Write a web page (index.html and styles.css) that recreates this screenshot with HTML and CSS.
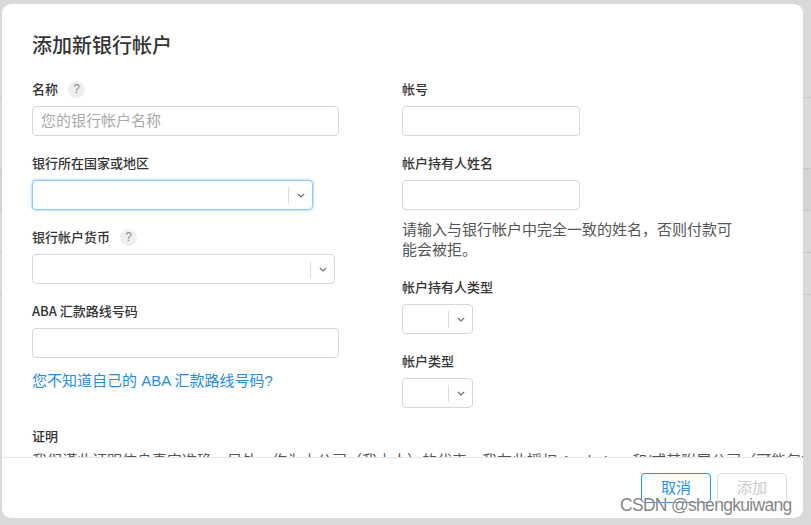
FILE: index.html
```html
<!DOCTYPE html>
<html lang="zh-CN">
<head>
<meta charset="utf-8">
<title>添加新银行帐户</title>
<link rel="stylesheet" href="styles.css">
</head>
<body>
<div class="page">
  <div class="bg-rows">
    <div class="bg-row h97"></div>
    <div class="bg-row h71"></div>
    <div class="bg-row h42 dark"></div>
    <div class="bg-row h42"></div>
    <div class="bg-row h41"></div>
  </div>

  <div class="modal">
    <div class="modal-body">
      <h1 class="title">添加新银行帐户</h1>
      <div class="form-grid">
        <div class="col">
          <div class="field">
            <div class="label-row"><span class="label">名称</span><span class="help-icon">?</span></div>
            <div class="input w307"><span class="placeholder">您的银行帐户名称</span></div>
          </div>
          <div class="field">
            <div class="label-row"><span class="label">银行所在国家或地区</span></div>
            <div class="select w281 focused">
              <span class="select-value"></span>
              <span class="select-divider"></span>
              <span class="select-arrow"><svg width="8" height="5" viewBox="0 0 8 5"><polyline points="0.8,0.8 4,4 7.2,0.8" fill="none" stroke="#666" stroke-width="1.1"/></svg></span>
            </div>
          </div>
          <div class="field">
            <div class="label-row"><span class="label">银行帐户货币</span><span class="help-icon">?</span></div>
            <div class="select w303">
              <span class="select-value"></span>
              <span class="select-divider"></span>
              <span class="select-arrow"><svg width="8" height="5" viewBox="0 0 8 5"><polyline points="0.8,0.8 4,4 7.2,0.8" fill="none" stroke="#666" stroke-width="1.1"/></svg></span>
            </div>
          </div>
          <div class="field">
            <div class="label-row"><span class="label">ABA 汇款路线号码</span></div>
            <div class="input w307"></div>
            <a class="link">您不知道自己的 ABA 汇款路线号码?</a>
          </div>
        </div>
        <div class="col">
          <div class="field">
            <div class="label-row"><span class="label">帐号</span></div>
            <div class="input w178"></div>
          </div>
          <div class="field">
            <div class="label-row"><span class="label">帐户持有人姓名</span></div>
            <div class="input w178"></div>
            <p class="help">请输入与银行帐户中完全一致的姓名，否则付款可能会被拒。</p>
          </div>
          <div class="field">
            <div class="label-row"><span class="label">帐户持有人类型</span></div>
            <div class="select w71">
              <span class="select-value"></span>
              <span class="select-divider"></span>
              <span class="select-arrow"><svg width="8" height="5" viewBox="0 0 8 5"><polyline points="0.8,0.8 4,4 7.2,0.8" fill="none" stroke="#666" stroke-width="1.1"/></svg></span>
            </div>
          </div>
          <div class="field">
            <div class="label-row"><span class="label">帐户类型</span></div>
            <div class="select w71">
              <span class="select-value"></span>
              <span class="select-divider"></span>
              <span class="select-arrow"><svg width="8" height="5" viewBox="0 0 8 5"><polyline points="0.8,0.8 4,4 7.2,0.8" fill="none" stroke="#666" stroke-width="1.1"/></svg></span>
            </div>
          </div>
        </div>
      </div>
      <div class="attest">
        <div class="label">证明</div>
        <p class="attest-text">我们谨此证明信息真实准确。另外，作为本公司（我本人）的代表，我在此授权 Apple Inc. 和/或其附属公司（可能包括）向上述银行帐户存入款项。</p>
      </div>
    </div>
    <div class="modal-footer">
      <button class="btn btn-primary">取消</button>
      <button class="btn btn-disabled">添加</button>
    </div>
  </div>

  <div class="watermark">CSDN @shengkuiwang</div>
</div>
</body>
</html>
```

FILE: styles.css
```css
html, body {
  margin: 0;
  padding: 0;
}

body {
  width: 811px;
  height: 525px;
  overflow: hidden;
  background: #d9d9d9;
  font-family: "Liberation Sans", "Noto Sans CJK SC", sans-serif;
  color: #333;
}

.page {
  position: relative;
  width: 811px;
  height: 525px;
}

/* dimmed page behind the modal */
.bg-rows {
  display: flex;
  flex-direction: column;
}

.bg-row {
  box-sizing: border-box;
  border-bottom: 1px solid #c8c8c8;
}

.bg-row.dark {
  background: #d3d3d3;
}

.h97 { height: 98px; }
.h71 { height: 71px; }
.h42 { height: 42px; }
.h41 { height: 42px; }

/* modal */
.modal {
  position: absolute;
  left: 2px;
  top: 4px;
  width: 801px;
  height: 514px;
  background: #fff;
  border-radius: 9px;
  display: flex;
  flex-direction: column;
  overflow: hidden;
}

.modal-body {
  flex: 0 0 453px;
  box-sizing: border-box;
  padding: 28px 30px 0;
  overflow: hidden;
}

.title {
  margin: 0 0 20px;
  font-size: 20px;
  line-height: 29px;
  font-weight: 500;
  color: #333;
}

.form-grid {
  display: grid;
  grid-template-columns: 340px 340px;
  column-gap: 30px;
}

.col {
  display: flex;
  flex-direction: column;
}

.field {
  display: flex;
  flex-direction: column;
  align-items: flex-start;
  margin-bottom: 19px;
}

.label-row {
  display: flex;
  align-items: flex-start;
  gap: 10px;
  height: 18px;
  margin-bottom: 7px;
}

.label {
  font-family: "Noto Sans CJK SC", "Liberation Sans", sans-serif;
  font-size: 13px;
  line-height: 16px;
  font-weight: 500;
  color: #333;
}

.help-icon {
  width: 17px;
  height: 17px;
  border-radius: 50%;
  background: #efefef;
  color: #8a8a8a;
  font-size: 12px;
  line-height: 17px;
  text-align: center;
  font-family: "Liberation Sans", sans-serif;
}

.input,
.select {
  box-sizing: border-box;
  height: 30px;
  border: 1px solid #d6d6d6;
  border-radius: 4px;
  background: #fff;
}

.input {
  padding: 0 8px;
  font-size: 15px;
  line-height: 28px;
}

.placeholder {
  color: #a9a9a9;
}

.select {
  display: flex;
  align-items: center;
}

.select.focused {
  border-color: #86cbff;
  box-shadow: 0 0 2px 1px rgba(90, 170, 255, 0.35);
}

.select-value {
  flex: 1;
}

.select-divider {
  width: 1px;
  height: 17px;
  background: #dcdcdc;
}

.select-arrow {
  width: 23px;
  display: flex;
  justify-content: center;
  align-items: center;
  padding-top: 1px;
}

.w307 { width: 307px; }
.w281 { width: 281px; }
.w303 { width: 303px; }
.w178 { width: 178px; }
.w71 { width: 71px; }

.link {
  margin-top: 13px;
  font-size: 15px;
  line-height: 20px;
  color: #1f8cec;
  cursor: pointer;
}

.help {
  margin: 10px 0 0;
  width: 340px;
  font-size: 15px;
  line-height: 20px;
  color: #555;
}

.attest .label {
  display: block;
  line-height: 18px;
}

.attest-text {
  margin: 5px 0 0;
  font-size: 15px;
  line-height: 22px;
  color: #555;
  white-space: nowrap;
}

.modal-footer {
  flex: 1;
  border-top: 1px solid #e6e6e6;
  display: flex;
  justify-content: flex-end;
  align-items: flex-start;
  gap: 6px;
  padding: 15px 16px 0;
}

.btn {
  box-sizing: border-box;
  width: 70px;
  height: 30px;
  border-radius: 4px;
  background: #fff;
  font-family: "Liberation Sans", "Noto Sans CJK SC", sans-serif;
  font-size: 15px;
  line-height: 28px;
  padding: 0;
}

.btn-primary {
  border: 1px solid #2391f0;
  color: #2391f0;
}

.btn-disabled {
  border: 1px solid #dedede;
  color: #c9c9c9;
}

.watermark {
  position: absolute;
  left: 620px;
  top: 494px;
  font-family: "Liberation Sans", sans-serif;
  font-size: 17.5px;
  line-height: 22px;
  letter-spacing: -0.7px;
  color: rgba(110, 110, 110, 0.85);
  text-shadow: 0 0 1px #fff;
  white-space: nowrap;
}
```
